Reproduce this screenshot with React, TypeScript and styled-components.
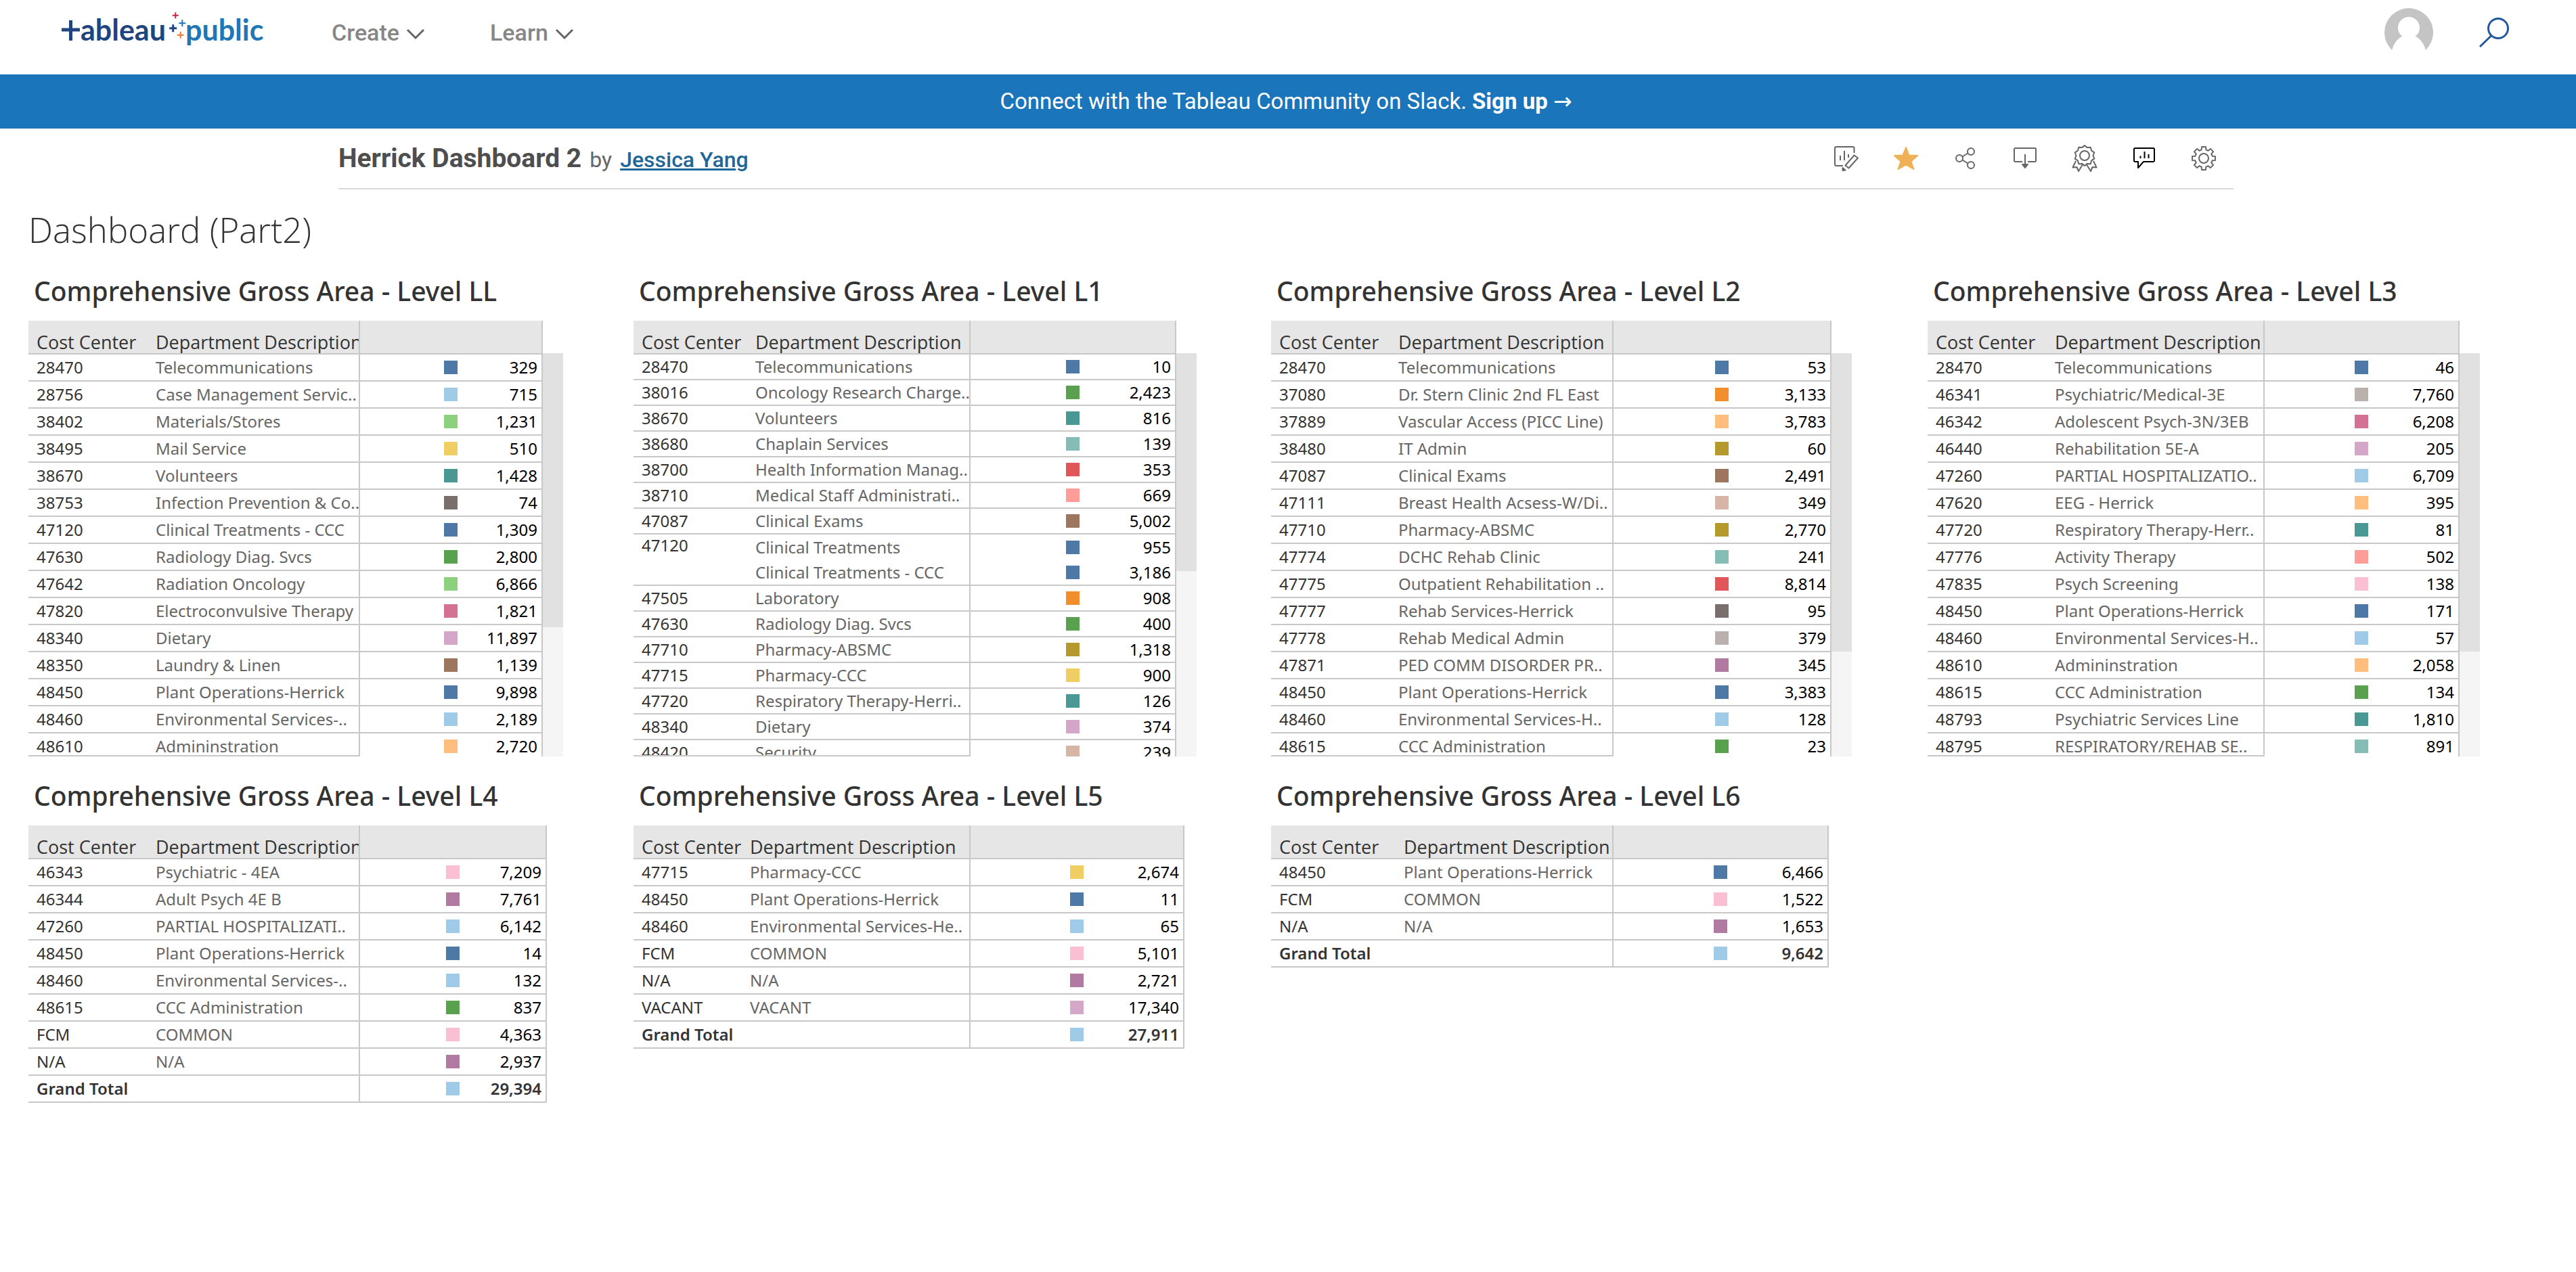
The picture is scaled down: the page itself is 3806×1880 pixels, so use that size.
import React from 'react';
import styled, { createGlobalStyle } from 'styled-components';

const GlobalStyle = createGlobalStyle`
  *, *::before, *::after { box-sizing: border-box; }
  body {
    margin: 0;
    background: #fff;
    color: #333;
    font-family: "Open Sans", "Noto Sans", sans-serif;
  }
  button {
    border: 0;
    padding: 0;
    background: none;
    font: inherit;
    color: inherit;
    cursor: pointer;
  }
  h1, h2, p { margin: 0; font-weight: 400; }
  svg { display: block; flex: none; }
`;

const UI_FONT = 'Roboto, "Liberation Sans", sans-serif';
const VIZ_FONT = '"Noto Sans", "Open Sans", sans-serif';
const LINE = '#c8c8c8';

/* ---------- site header ---------- */

const Header = styled.header`
  display: flex;
  align-items: center;
  height: 110px;
  padding: 0 99px 14px 90px;
  font-family: ${UI_FONT};
`;

const LogoLink = styled.a`
  display: block;
  text-decoration: none;
`;

const LogoText = styled.text`
  font-family: Lato, sans-serif;
  font-weight: 700;
  font-size: 43px;
`;

const Nav = styled.nav`
  display: flex;
  gap: 96px;
  margin-left: 100px;
`;

const NavButton = styled.button`
  display: flex;
  align-items: center;
  gap: 10px;
  font-size: 34px;
  line-height: 40px;
  font-weight: 500;
  color: #868686;
`;

const HeaderActions = styled.div`
  display: flex;
  align-items: center;
  gap: 68px;
  margin-left: auto;
`;

const Banner = styled.p`
  height: 80px;
  padding-right: 6px;
  background: #1b75bb;
  color: #fff;
  text-align: center;
  font-family: ${UI_FONT};
  font-size: 33px;
  line-height: 80px;
`;

const BannerLink = styled.a`
  color: inherit;
  font-weight: 700;
  text-decoration: none;
`;

const Arrow = styled.span`
  font-family: "DejaVu Sans", sans-serif;
  font-weight: 400;
`;

/* ---------- workbook title bar ---------- */

const TitleBar = styled.section`
  display: flex;
  align-items: center;
  justify-content: space-between;
  width: calc(100% - 1006px);
  height: 90px;
  margin-left: 500px;
  padding-right: 24px;
  border-bottom: 2px solid #d9d9d9;
  font-family: ${UI_FONT};
`;

const TitleText = styled.div`
  display: flex;
  align-items: baseline;
  gap: 12px;
  padding-top: 2px;
  font-size: 32px;
  line-height: 48px;
  color: #666;
`;

const WorkbookName = styled.h1`
  font-size: 39px;
  font-weight: 700;
  color: #4e4e4e;
`;

const AuthorLink = styled.a`
  color: #1f6799;
  font-weight: 500;
`;

const Toolbar = styled.div`
  display: flex;
  gap: 48px;
`;

const IconButton = styled.button<{ $tone?: string }>`
  color: ${(p) => p.$tone ?? '#666'};
`;

/* ---------- dashboard ---------- */

const Dashboard = styled.main`
  padding: 27px 0 0 42px;
`;

const DashboardTitle = styled.h2`
  font-size: 51px;
  font-weight: 300;
  line-height: 64px;
`;

const PanelGrid = styled.div`
  display: grid;
  grid-template-columns: 894fr 942fr 970fr 958fr;
  row-gap: 32px;
  margin-top: 33px;
  font-family: ${VIZ_FONT};
`;

const Panel = styled.section<{ $gap: number }>`
  min-width: 0;
  margin-right: ${(p) => p.$gap}px;
`;

const PanelTitle = styled.h2`
  padding-left: 8px;
  margin-bottom: 18px;
  font-size: 39px;
  font-weight: 500;
  line-height: 52px;
  white-space: nowrap;
`;

const Frame = styled.div`
  display: flex;
`;

const View = styled.div<{ $clip: boolean; $labels: number }>`
  position: relative;
  flex: 1;
  min-width: 0;
  ${(p) =>
    p.$clip &&
    `
    height: 644px;
    overflow: hidden;
    &::after {
      content: "";
      position: absolute;
      left: 0;
      bottom: 0;
      width: ${p.$labels}px;
      height: 2px;
      background: ${LINE};
    }
  `}
`;

const ScrollTrack = styled.div`
  width: 30px;
  margin-top: 48px;
  background: #f5f5f5;
`;

const ScrollThumb = styled.div<{ $size: number }>`
  height: ${(p) => p.$size}%;
  background: #e1e1e1;
`;

const Table = styled.table`
  width: 100%;
  table-layout: fixed;
  border-collapse: separate;
  border-spacing: 0;
  font-size: 24px;
  line-height: 32px;
`;

const Col = styled.col<{ $w?: number }>`
  width: ${(p) => (p.$w ? `${p.$w}px` : 'auto')};
`;

const HeadCell = styled.th<{ $ruled?: boolean }>`
  height: 50px;
  padding: 0 0 0 12px;
  overflow: hidden;
  background: #e6e6e6;
  border-bottom: 2px solid ${LINE};
  border-right: ${(p) => (p.$ruled ? `2px solid ${LINE}` : '0')};
  font-family: "Open Sans", "Noto Sans", sans-serif;
  font-size: 27px;
  font-weight: 400;
  text-align: left;
  vertical-align: bottom;
  white-space: nowrap;
`;

const Row = styled.tr<{ $h: number; $bold?: boolean }>`
  height: ${(p) => p.$h}px;
  font-weight: ${(p) => (p.$bold ? 600 : 400)};
`;

const Cell = styled.td<{ $open?: boolean }>`
  padding: 0 0 0 12px;
  overflow: hidden;
  border-bottom: ${(p) => (p.$open ? '0' : `2px solid ${LINE}`)};
  white-space: nowrap;
`;

const CodeCell = styled(Cell)`
  color: #333;
  &[rowspan='2'] { vertical-align: top; }
`;

const DeptCell = styled(Cell)`
  border-right: 2px solid ${LINE};
  color: #666;
`;

const AreaCell = styled(Cell)<{ $bold?: boolean }>`
  padding: 0 6px 0 0;
  border-right: 2px solid ${LINE};
  color: ${(p) => (p.$bold ? '#333' : '#000')};
`;

const AreaContent = styled.div`
  display: grid;
  grid-template-columns: 1fr 20px 1fr;
  align-items: center;
  padding-left: 6px;
  text-align: right;
`;

const Swatch = styled.span<{ $c: string }>`
  grid-column: 2;
  height: 20px;
  background: ${(p) => p.$c};
`;

/* ---------- data ---------- */

const C = {
  blue: '#4e79a7',
  sky: '#a0cbe8',
  orange: '#f28e2b',
  peach: '#ffbe7d',
  green: '#59a14f',
  lime: '#8cd17d',
  olive: '#b6992d',
  yellow: '#f1ce63',
  teal: '#499894',
  aqua: '#86bcb6',
  red: '#e15759',
  coral: '#ff9d9a',
  slate: '#79706e',
  stone: '#bab0ac',
  rose: '#d37295',
  pink: '#fabfd2',
  plum: '#b07aa1',
  lilac: '#d4a6c8',
  brown: '#9d7660',
  tan: '#d7b5a6',
};

type Entry = [code: string, dept: string, color: keyof typeof C, area: string];

interface Level {
  name: string;
  code: number;
  dept: number;
  gap: number;
  rowHeight?: number;
  thumb?: number;
  rows: Entry[];
  total?: string;
}

const levels: Level[] = [
  {
    name: 'LL', code: 176, dept: 314, gap: 104, thumb: 68,
    rows: [
      ['28470', 'Telecommunications', 'blue', '329'],
      ['28756', 'Case Management Servic..', 'sky', '715'],
      ['38402', 'Materials/Stores', 'lime', '1,231'],
      ['38495', 'Mail Service', 'yellow', '510'],
      ['38670', 'Volunteers', 'teal', '1,428'],
      ['38753', 'Infection Prevention & Co..', 'slate', '74'],
      ['47120', 'Clinical Treatments - CCC', 'blue', '1,309'],
      ['47630', 'Radiology Diag. Svcs', 'green', '2,800'],
      ['47642', 'Radiation Oncology', 'lime', '6,866'],
      ['47820', 'Electroconvulsive Therapy', 'rose', '1,821'],
      ['48340', 'Dietary', 'lilac', '11,897'],
      ['48350', 'Laundry & Linen', 'brown', '1,139'],
      ['48450', 'Plant Operations-Herrick', 'blue', '9,898'],
      ['48460', 'Environmental Services-..', 'sky', '2,189'],
      ['48610', 'Admininstration', 'peach', '2,720'],
    ],
  },
  {
    name: 'L1', code: 168, dept: 330, gap: 110, rowHeight: 38, thumb: 54,
    rows: [
      ['28470', 'Telecommunications', 'blue', '10'],
      ['38016', 'Oncology Research Charge..', 'green', '2,423'],
      ['38670', 'Volunteers', 'teal', '816'],
      ['38680', 'Chaplain Services', 'aqua', '139'],
      ['38700', 'Health Information Manag..', 'red', '353'],
      ['38710', 'Medical Staff Administrati..', 'coral', '669'],
      ['47087', 'Clinical Exams', 'brown', '5,002'],
      ['47120', 'Clinical Treatments', 'blue', '955'],
      ['', 'Clinical Treatments - CCC', 'blue', '3,186'],
      ['47505', 'Laboratory', 'orange', '908'],
      ['47630', 'Radiology Diag. Svcs', 'green', '400'],
      ['47710', 'Pharmacy-ABSMC', 'olive', '1,318'],
      ['47715', 'Pharmacy-CCC', 'yellow', '900'],
      ['47720', 'Respiratory Therapy-Herri..', 'teal', '126'],
      ['48340', 'Dietary', 'lilac', '374'],
      ['48420', 'Security', 'tan', '239'],
    ],
  },
  {
    name: 'L2', code: 176, dept: 330, gap: 112, thumb: 74,
    rows: [
      ['28470', 'Telecommunications', 'blue', '53'],
      ['37080', 'Dr. Stern Clinic 2nd FL East', 'orange', '3,133'],
      ['37889', 'Vascular Access (PICC Line)', 'peach', '3,783'],
      ['38480', 'IT Admin', 'olive', '60'],
      ['47087', 'Clinical Exams', 'brown', '2,491'],
      ['47111', 'Breast Health Acsess-W/Di..', 'tan', '349'],
      ['47710', 'Pharmacy-ABSMC', 'olive', '2,770'],
      ['47774', 'DCHC Rehab Clinic', 'aqua', '241'],
      ['47775', 'Outpatient Rehabilitation ..', 'red', '8,814'],
      ['47777', 'Rehab Services-Herrick', 'slate', '95'],
      ['47778', 'Rehab Medical Admin', 'stone', '379'],
      ['47871', 'PED COMM DISORDER PR..', 'plum', '345'],
      ['48450', 'Plant Operations-Herrick', 'blue', '3,383'],
      ['48460', 'Environmental Services-H..', 'sky', '128'],
      ['48615', 'CCC Administration', 'green', '23'],
    ],
  },
  {
    name: 'L3', code: 176, dept: 322, gap: 142, thumb: 74,
    rows: [
      ['28470', 'Telecommunications', 'blue', '46'],
      ['46341', 'Psychiatric/Medical-3E', 'stone', '7,760'],
      ['46342', 'Adolescent Psych-3N/3EB', 'rose', '6,208'],
      ['46440', 'Rehabilitation 5E-A', 'lilac', '205'],
      ['47260', 'PARTIAL HOSPITALIZATIO..', 'sky', '6,709'],
      ['47620', 'EEG - Herrick', 'peach', '395'],
      ['47720', 'Respiratory Therapy-Herr..', 'teal', '81'],
      ['47776', 'Activity Therapy', 'coral', '502'],
      ['47835', 'Psych Screening', 'pink', '138'],
      ['48450', 'Plant Operations-Herrick', 'blue', '171'],
      ['48460', 'Environmental Services-H..', 'sky', '57'],
      ['48610', 'Admininstration', 'peach', '2,058'],
      ['48615', 'CCC Administration', 'green', '134'],
      ['48793', 'Psychiatric Services Line', 'teal', '1,810'],
      ['48795', 'RESPIRATORY/REHAB SE..', 'aqua', '891'],
    ],
  },
  {
    name: 'L4', code: 176, dept: 314, gap: 128, total: '29,394',
    rows: [
      ['46343', 'Psychiatric - 4EA', 'pink', '7,209'],
      ['46344', 'Adult Psych 4E B', 'plum', '7,761'],
      ['47260', 'PARTIAL HOSPITALIZATI..', 'sky', '6,142'],
      ['48450', 'Plant Operations-Herrick', 'blue', '14'],
      ['48460', 'Environmental Services-..', 'sky', '132'],
      ['48615', 'CCC Administration', 'green', '837'],
      ['FCM', 'COMMON', 'pink', '4,363'],
      ['N/A', 'N/A', 'plum', '2,937'],
    ],
  },
  {
    name: 'L5', code: 160, dept: 338, gap: 128, total: '27,911',
    rows: [
      ['47715', 'Pharmacy-CCC', 'yellow', '2,674'],
      ['48450', 'Plant Operations-Herrick', 'blue', '11'],
      ['48460', 'Environmental Services-He..', 'sky', '65'],
      ['FCM', 'COMMON', 'pink', '5,101'],
      ['N/A', 'N/A', 'plum', '2,721'],
      ['VACANT', 'VACANT', 'lilac', '17,340'],
    ],
  },
  {
    name: 'L6', code: 184, dept: 322, gap: 146, total: '9,642',
    rows: [
      ['48450', 'Plant Operations-Herrick', 'blue', '6,466'],
      ['FCM', 'COMMON', 'pink', '1,522'],
      ['N/A', 'N/A', 'plum', '1,653'],
    ],
  },
];

/* ---------- drawings ---------- */

const plus = (x: number, y: number, r: number) =>
  `M${x - r} ${y}h${2 * r}M${x} ${y - r}v${2 * r}`;

const Logo = () => (
  <svg width="300" height="72" viewBox="90 12 300 72" fill="none">
    <path d="M91 44h27M104.500 30v30" stroke="#1f447e" strokeWidth="5" />
    <LogoText x="119" y="60" fill="#1f447e">ableau</LogoText>
    <path d={plus(255.7, 41.7, 5.5)} stroke="#1f447e" strokeWidth="3" />
    <path d={plus(259.3, 22.7, 4.5)} stroke="#c2283e" strokeWidth="2" />
    <path d={plus(269.3, 34.3, 5)} stroke="#2176b5" strokeWidth="2" />
    <path d={plus(266.7, 51.7, 5)} stroke="#e8762d" strokeWidth="2" />
    <LogoText x="274" y="60" fill="#2176b5">public</LogoText>
  </svg>
);

const Chevron = () => (
  <svg width="28" height="20" viewBox="0 0 28 20" fill="none" stroke="#666" strokeWidth="3">
    <path d="M2 6l12 12L26 6" />
  </svg>
);

const Avatar = () => (
  <svg width="72" height="72" viewBox="0 0 72 72">
    <path d="M11 62a36 36 0 1 1 50 0z" fill="#c4c4c4" />
    <circle cx="36" cy="29" r="16" fill="#fff" />
    <path d="M11 63c2-10 8-18 15-21h20c7 3 13 11 15 21z" fill="#fff" />
  </svg>
);

const SearchIcon = () => (
  <svg width="44" height="44" viewBox="0 0 44 44" fill="none" stroke="#2456a0" strokeWidth="3">
    <circle cx="28" cy="16" r="14.500" />
    <path d="M18 26.500L1 43" />
  </svg>
);

const Glyph = ({ children }: { children: React.ReactNode }) => (
  <svg
    width="40"
    height="40"
    viewBox="0 0 40 40"
    fill="none"
    stroke="currentColor"
    strokeWidth="2"
    strokeLinejoin="round"
  >
    {children}
  </svg>
);

const polar = (cx: number, cy: number, r: number, deg: number) => {
  const a = (deg * Math.PI) / 180;
  return `${(cx + r * Math.sin(a)).toFixed(2)} ${(cy - r * Math.cos(a)).toFixed(2)}`;
};

const gearPath =
  'M' +
  Array.from({ length: 8 }, (_, i) => i * 45)
    .flatMap((d) => [
      polar(20, 20, 13, d - 15),
      polar(20, 20, 17.2, d - 10),
      polar(20, 20, 17.2, d + 10),
      polar(20, 20, 13, d + 15),
    ])
    .join('L') +
  'z';

const rosettePath =
  'M' +
  Array.from({ length: 20 }, (_, i) => polar(20, 16, i % 2 ? 12.5 : 15, i * 18)).join('L') +
  'z';

const tools: { label: string; tone?: string; art: React.ReactNode }[] = [
  {
    label: 'Edit',
    art: (
      <>
        <path d="M31.500 12V5a2 2 0 0 0-2-2H5a2 2 0 0 0-2 2v24a2 2 0 0 0 2 2h10" />
        <path d="M11 16v7M17 9v14M23 14v5" />
        <path d="M31.500 15.500l5.500 4-13.500 15-5-4z" />
        <path d="M14.500 34l4 3.500-4 .500z" fill="currentColor" />
      </>
    ),
  },
  {
    label: 'Favorite',
    tone: '#f0b055',
    art: (
      <path
        d="M20 4l4.500 11.500L37 16l-9.500 8.500L31.500 36 20 29.500 8.500 36l4-11.500L3 16l12.500-.500z"
        fill="currentColor"
      />
    ),
  },
  {
    label: 'Share',
    art: (
      <>
        <circle cx="11" cy="20" r="5" />
        <circle cx="28" cy="10" r="5" />
        <circle cx="28" cy="30" r="5" />
        <path d="M15.500 17.500l8-5M15.500 22.500l8 5" />
      </>
    ),
  },
  {
    label: 'Download',
    art: (
      <>
        <path d="M16 25H5.500A1.500 1.500 0 0 1 4 23.500v-17A1.500 1.500 0 0 1 5.500 5h29A1.500 1.500 0 0 1 36 6.500v17a1.500 1.500 0 0 1-1.500 1.500H24" />
        <path d="M20 14v15" />
        <path d="M16 29h8l-4 5z" fill="currentColor" />
      </>
    ),
  },
  {
    label: 'Nominate',
    art: (
      <>
        <path d={rosettePath} />
        <circle cx="20" cy="16" r="7" />
        <path d="M7 24L2.500 33.500l6-.500L11 39l6.500-10.500M33 24l4.500 9.500-6-.500L29 39l-6.500-10.500" />
      </>
    ),
  },
  {
    label: 'Comment',
    tone: '#000',
    art: (
      <>
        <path d="M11 25H6.500A1.500 1.500 0 0 1 5 23.500v-17A1.500 1.500 0 0 1 6.500 5h27A1.500 1.500 0 0 1 35 6.500v17a1.500 1.500 0 0 1-1.500 1.500H19l-8 9z" />
        <path d="M14.500 16.500v3.500M20.500 10v10M26.500 14v6" />
      </>
    ),
  },
  {
    label: 'Settings',
    art: (
      <>
        <path d={gearPath} />
        <circle cx="20" cy="20" r="7" />
      </>
    ),
  },
];

/* ---------- panels ---------- */

interface AreaProps {
  color: keyof typeof C;
  value: string;
  bold?: boolean;
  open?: boolean;
}

const Area = ({ color, value, bold, open }: AreaProps) => (
  <AreaCell $bold={bold} $open={open}>
    <AreaContent>
      <Swatch $c={C[color]} />
      <span>{value}</span>
    </AreaContent>
  </AreaCell>
);

const LevelPanel = ({ level }: { level: Level }) => {
  const h = level.rowHeight ?? 40;
  const { rows } = level;
  return (
    <Panel $gap={level.gap}>
      <PanelTitle>Comprehensive Gross Area - Level {level.name}</PanelTitle>
      <Frame>
        <View $clip={Boolean(level.thumb)} $labels={level.code + level.dept}>
          <Table>
            <colgroup>
              <Col $w={level.code} />
              <Col $w={level.dept} />
              <Col />
            </colgroup>
            <thead>
              <tr>
                <HeadCell scope="col">Cost Center</HeadCell>
                <HeadCell scope="col" $ruled>Department Description</HeadCell>
                <HeadCell scope="col" $ruled />
              </tr>
            </thead>
            <tbody>
              {rows.map(([code, dept, color, area], i) => {
                // a row without a code belongs to the cost center above it
                const grouped = rows[i + 1]?.[0] === '';
                return (
                  <Row key={code + dept} $h={h}>
                    {code && <CodeCell rowSpan={grouped ? 2 : 1}>{code}</CodeCell>}
                    <DeptCell $open={grouped}>{dept}</DeptCell>
                    <Area color={color} value={area} open={grouped} />
                  </Row>
                );
              })}
              {level.total && (
                <Row $h={h} $bold>
                  <CodeCell>Grand Total</CodeCell>
                  <DeptCell />
                  <Area color="sky" value={level.total} bold />
                </Row>
              )}
            </tbody>
          </Table>
        </View>
        {level.thumb && (
          <ScrollTrack>
            <ScrollThumb $size={level.thumb} />
          </ScrollTrack>
        )}
      </Frame>
    </Panel>
  );
};

export default function App() {
  return (
    <>
      <GlobalStyle />
      <Header>
        <LogoLink href="#home" aria-label="Tableau Public">
          <Logo />
        </LogoLink>
        <Nav>
          <NavButton type="button">Create <Chevron /></NavButton>
          <NavButton type="button">Learn <Chevron /></NavButton>
        </Nav>
        <HeaderActions>
          <button type="button" aria-label="Profile"><Avatar /></button>
          <button type="button" aria-label="Search"><SearchIcon /></button>
        </HeaderActions>
      </Header>
      <Banner>
        Connect with the Tableau Community on Slack.{' '}
        <BannerLink href="#slack">Sign up <Arrow>→</Arrow></BannerLink>
      </Banner>
      <TitleBar>
        <TitleText>
          <WorkbookName>Herrick Dashboard 2</WorkbookName>
          <span>by</span>
          <AuthorLink href="#author">Jessica Yang</AuthorLink>
        </TitleText>
        <Toolbar>
          {tools.map((tool) => (
            <IconButton key={tool.label} type="button" aria-label={tool.label} $tone={tool.tone}>
              <Glyph>{tool.art}</Glyph>
            </IconButton>
          ))}
        </Toolbar>
      </TitleBar>
      <Dashboard>
        <DashboardTitle>Dashboard (Part2)</DashboardTitle>
        <PanelGrid>
          {levels.map((level) => (
            <LevelPanel key={level.name} level={level} />
          ))}
        </PanelGrid>
      </Dashboard>
    </>
  );
}
